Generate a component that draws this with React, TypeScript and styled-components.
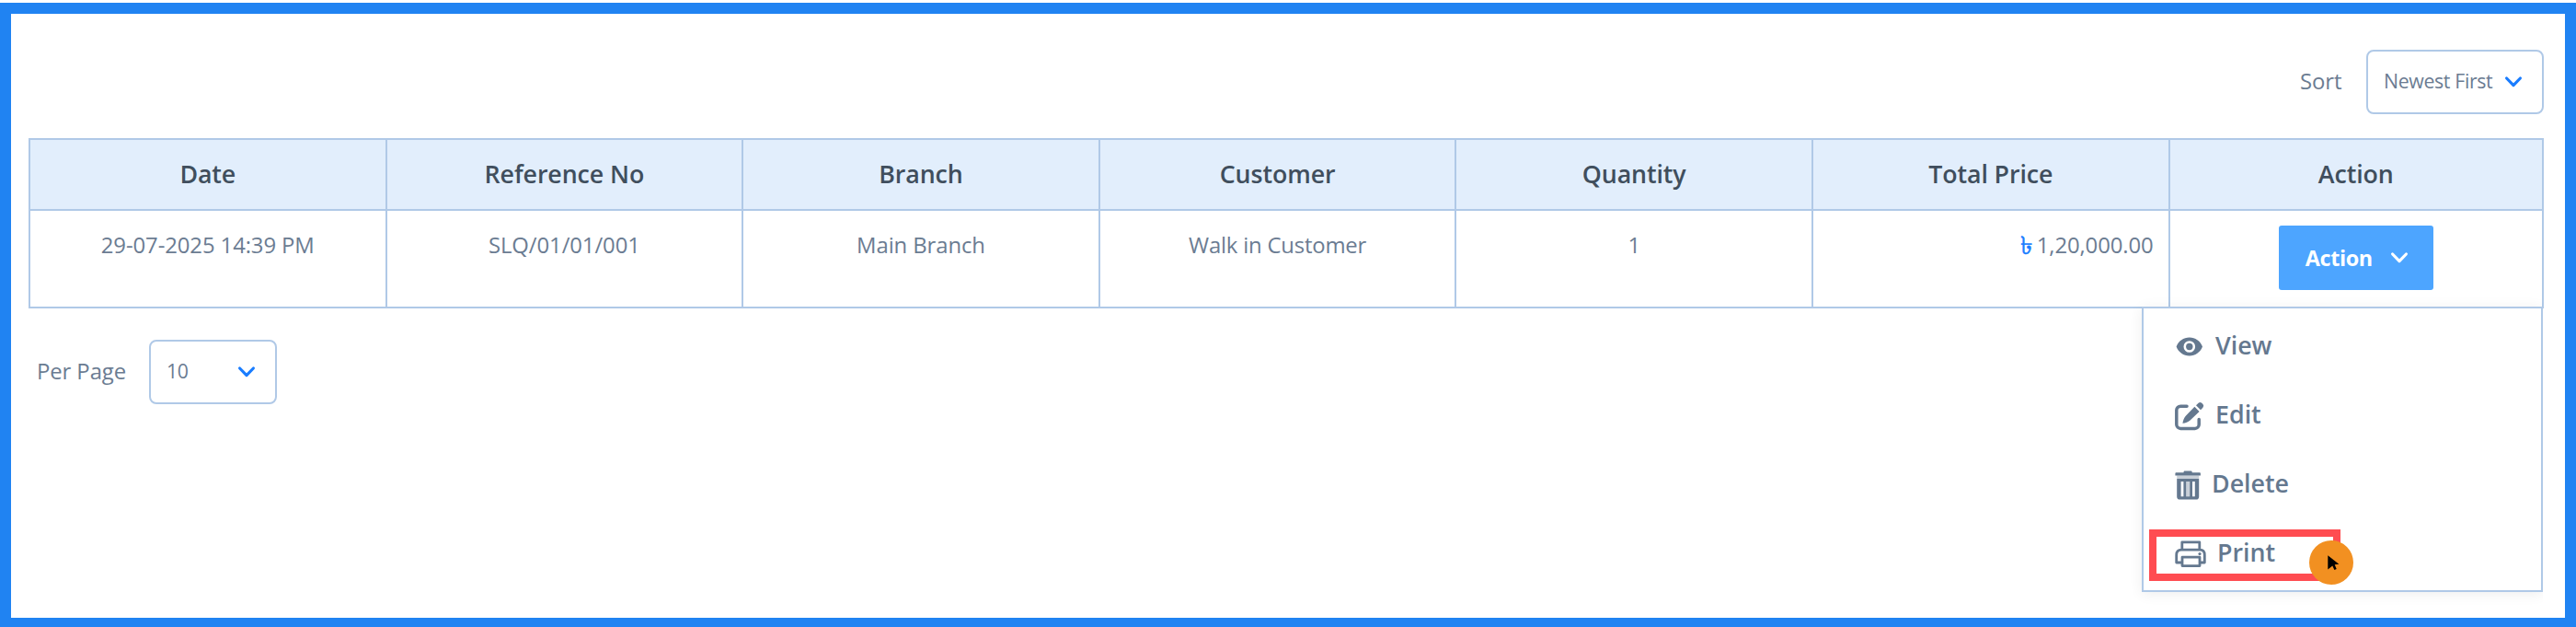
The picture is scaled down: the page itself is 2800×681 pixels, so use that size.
import React from "react";
import styled, { createGlobalStyle } from "styled-components";

const color = {
  frame: "#2083f2",
  line: "#b0c9e7",
  headBg: "#e2eefc",
  heading: "#404e5d",
  text: "#6b7c92",
  menu: "#64788f",
  accent: "#1a7dff",
  button: "#4da5ff",
};

const GlobalStyle = createGlobalStyle`
  *, *::before, *::after { box-sizing: border-box; }
  body { margin: 0; background: #fff; font-family: "Open Sans", "Noto Sans", sans-serif; }
  svg { display: block; flex: none; }
`;

const Frame = styled.main`
  position: relative;
  width: 2800px;
  height: 678px;
  margin-top: 3px;
  border: 12px solid ${color.frame};
  border-bottom-width: 10px;
  padding: 39px 23px 0 19px;
  overflow: hidden;
`;

const Toolbar = styled.div`
  display: flex;
  justify-content: flex-end;
  align-items: center;
  height: 70px;
`;

const Footer = styled(Toolbar)`
  justify-content: flex-start;
  margin: 34px 0 0 9px;
`;

const Label = styled.span<{ $width: number }>`
  width: ${(p) => p.$width}px;
  padding-bottom: 2px;
  font-size: 23.9px;
  line-height: 36px;
  letter-spacing: -0.1px;
  color: ${color.text};
`;

const Select = styled.button<{ $width: number }>`
  display: flex;
  justify-content: space-between;
  align-items: center;
  width: ${(p) => p.$width}px;
  height: 70px;
  padding: 0 21px 0 17px;
  border: 2px solid ${color.line};
  border-radius: 8px;
  background: #fff;
  color: ${color.text};
  font: 400 21.3px/32px "Open Sans", sans-serif;
  letter-spacing: -0.35px;
  white-space: nowrap;
`;

const SelectValue = styled.span`
  padding-bottom: 2px;
`;

const Table = styled.div`
  display: grid;
  grid-template-columns: repeat(6, 387.6px) 1fr;
  grid-template-rows: 77px 106px;
  margin-top: 26px;
  border: solid ${color.line};
  border-width: 2px 0 0 2px;
`;

const HeadCell = styled.div`
  display: flex;
  justify-content: center;
  align-items: center;
  padding-bottom: 3px;
  border: solid ${color.line};
  border-width: 0 2px 2px 0;
  background: ${color.headBg};
  color: ${color.heading};
  font-size: 26.8px;
  font-weight: 600;
  letter-spacing: -0.1px;
`;

const Cell = styled.div<{ $align?: string; $spacing?: string }>`
  display: flex;
  justify-content: ${(p) => p.$align ?? "center"};
  align-items: flex-start;
  padding: 19px 16px 0;
  border: solid ${color.line};
  border-width: 0 2px 2px 0;
  color: ${color.text};
  font-size: 23.9px;
  line-height: 36px;
  letter-spacing: ${(p) => p.$spacing ?? "-0.1px"};
`;

const ActionCell = styled(Cell)`
  padding-top: 16px;
`;

const Currency = styled.span`
  margin-right: 5px;
  color: ${color.accent};
  font-size: 27px;
  font-weight: 500;
  -webkit-text-stroke: 0.5px ${color.accent};
`;

const ActionButton = styled.button`
  display: flex;
  justify-content: space-between;
  align-items: center;
  width: 168px;
  height: 70px;
  padding: 0 27px 0 29px;
  border: 0;
  border-radius: 3px;
  background: ${color.button};
  color: #fff;
  font: 700 23.4px/36px "Open Sans", sans-serif;
  letter-spacing: -0.4px;
`;

const Menu = styled.div`
  position: absolute;
  top: 318px;
  right: 24px;
  width: 436px;
  height: 310px;
  padding: 4px 0 0 34px;
  border: 2px solid ${color.line};
  background: #fff;
  box-shadow: 0 2px 14px rgba(0, 0, 0, 0.07);
  clip-path: inset(-14px 0 -20px -20px);
`;

const MenuItem = styled.div<{ $gap: number }>`
  display: flex;
  align-items: center;
  gap: ${(p) => p.$gap}px;
  height: 75px;
  color: ${color.menu};
  font-size: 26.8px;
  font-weight: 600;
  line-height: 40px;
`;

const MenuText = styled.span`
  padding-bottom: 4px;
`;

const Highlight = styled.div`
  position: absolute;
  left: 2324px;
  top: 560px;
  width: 208px;
  height: 56px;
  border: 8px solid #ff4c51;
`;

const Pointer = styled.div`
  position: absolute;
  left: 2498px;
  top: 572px;
  display: flex;
  justify-content: center;
  align-items: center;
  width: 48px;
  height: 48px;
  padding-left: 4px;
  border-radius: 50%;
  background: #f29021;
`;

const Accent = styled.span`
  color: ${color.accent};
`;

const Chevron = () => (
  <svg width="20" height="14" viewBox="0 0 20 14" fill="none" stroke="currentColor" strokeWidth="3.2" strokeLinecap="round" strokeLinejoin="round">
    <path d="M2.6 3 10 10.6 17.4 3" />
  </svg>
);

const EyeIcon = () => (
  <svg width="32" height="30" viewBox="0 0 32 30">
    <path fill="currentColor" fillRule="evenodd" d="M1.6 14.5C4 8.3 9.4 4.6 15.8 4.6S27.6 8.3 30 14.5C27.6 20.7 22.2 24.4 15.8 24.4S4 20.7 1.6 14.5ZM15.8 8.2a6.3 6.3 0 1 0 0 12.6a6.3 6.3 0 1 0 0-12.6Z" />
    <circle cx="15.8" cy="14.5" r="3.7" fill="currentColor" />
  </svg>
);

const EditIcon = () => (
  <svg width="32" height="32" viewBox="0 0 32 32">
    <path fill="none" stroke="currentColor" strokeWidth="3.5" strokeLinecap="round" d="M13 5.2H6.2A4.4 4.4 0 0 0 1.8 9.6V25A4.4 4.4 0 0 0 6.2 29.4H21.8A4.4 4.4 0 0 0 26.2 25V19.5" />
    <path fill="currentColor" d="M21.4 5.8 26.6 11 16.6 20.4C14.4 22.3 11.5 23.4 8.4 23.8 8.9 20.7 10 17.7 12 15.6ZM23 4.3 25.6 1.7Q27.2.2 29 1.5L30.5 3Q32 4.9 30.4 6.7L28 9.3Z" />
  </svg>
);

const DeleteIcon = () => (
  <svg width="28" height="32" viewBox="0 0 28 32">
    <path fill="currentColor" fillRule="evenodd" d="M9.5 2.2C9.5 1 10 .6 11 .6h6.2c1 0 1.5.4 1.5 1.6h8c.8 0 1.2.4 1.2 1.2V5.4H.4V3.4c0-.8.4-1.2 1.2-1.2ZM2.2 9H26.2V28.5Q26.2 31.6 23 31.6H5.4Q2.2 31.6 2.2 28.5ZM6.6 12V28.2H9.4V12ZM12.2 12V28.2H16.2V12ZM19 12V28.2H21.8V12Z" />
    <path fill="currentColor" opacity=".35" d="M2.2 5.4H26.2V9H2.2ZM12.2 12H16.2V28.2H12.2Z" />
  </svg>
);

const PrintIcon = () => (
  <svg width="34" height="30" viewBox="0 0 34 30" fill="none" stroke="currentColor" strokeWidth="2.8" strokeLinejoin="round">
    <path d="M7.8 10.2V1.8H26.8V10.2M7.5 24H1.7V15.8Q1.7 10.2 7.2 10.2H27.2Q32.3 10.2 32.3 15.8V24H27.2M8 18.2H27V27.6H8Z" />
    <circle cx="27" cy="14.6" r="1.6" fill="currentColor" stroke="none" />
  </svg>
);

const CursorIcon = () => (
  <svg width="13" height="17" viewBox="0 0 13 17">
    <path fill="#000" d="M.3.2 12.4 9.8 7.7 10.2 9.7 14.9 7.4 16 5.3 11.4.3 15.5Z" />
  </svg>
);

const columns = ["Date", "Reference No", "Branch", "Customer", "Quantity", "Total Price", "Action"];

const menuItems = [
  { label: "View", gap: 12, Icon: EyeIcon },
  { label: "Edit", gap: 12, Icon: EditIcon },
  { label: "Delete", gap: 12, Icon: DeleteIcon },
  { label: "Print", gap: 12, Icon: PrintIcon },
];

export default function App() {
  return (
    <>
      <GlobalStyle />
      <Frame>
        <Toolbar>
          <Label $width={72}>Sort</Label>
          <Select $width={193}>
            <SelectValue>Newest First</SelectValue>
            <Accent>
              <Chevron />
            </Accent>
          </Select>
        </Toolbar>
        <Table>
          {columns.map((name) => (
            <HeadCell key={name}>{name}</HeadCell>
          ))}
          <Cell>29-07-2025 14:39 PM</Cell>
          <Cell>SLQ/01/01/001</Cell>
          <Cell>Main Branch</Cell>
          <Cell $spacing="-0.2px">Walk in Customer</Cell>
          <Cell>1</Cell>
          <Cell $align="flex-end">
            <Currency>৳</Currency>1,20,000.00
          </Cell>
          <ActionCell>
            <ActionButton>
              Action
              <Chevron />
            </ActionButton>
          </ActionCell>
        </Table>
        <Footer>
          <Label $width={122}>Per Page</Label>
          <Select $width={139}>
            <SelectValue>10</SelectValue>
            <Accent>
              <Chevron />
            </Accent>
          </Select>
        </Footer>
        <Menu>
          {menuItems.map(({ label, gap, Icon }) => (
            <MenuItem key={label} $gap={gap}>
              <Icon />
              <MenuText>{label}</MenuText>
            </MenuItem>
          ))}
        </Menu>
        <Highlight />
        <Pointer>
          <CursorIcon />
        </Pointer>
      </Frame>
    </>
  );
}
